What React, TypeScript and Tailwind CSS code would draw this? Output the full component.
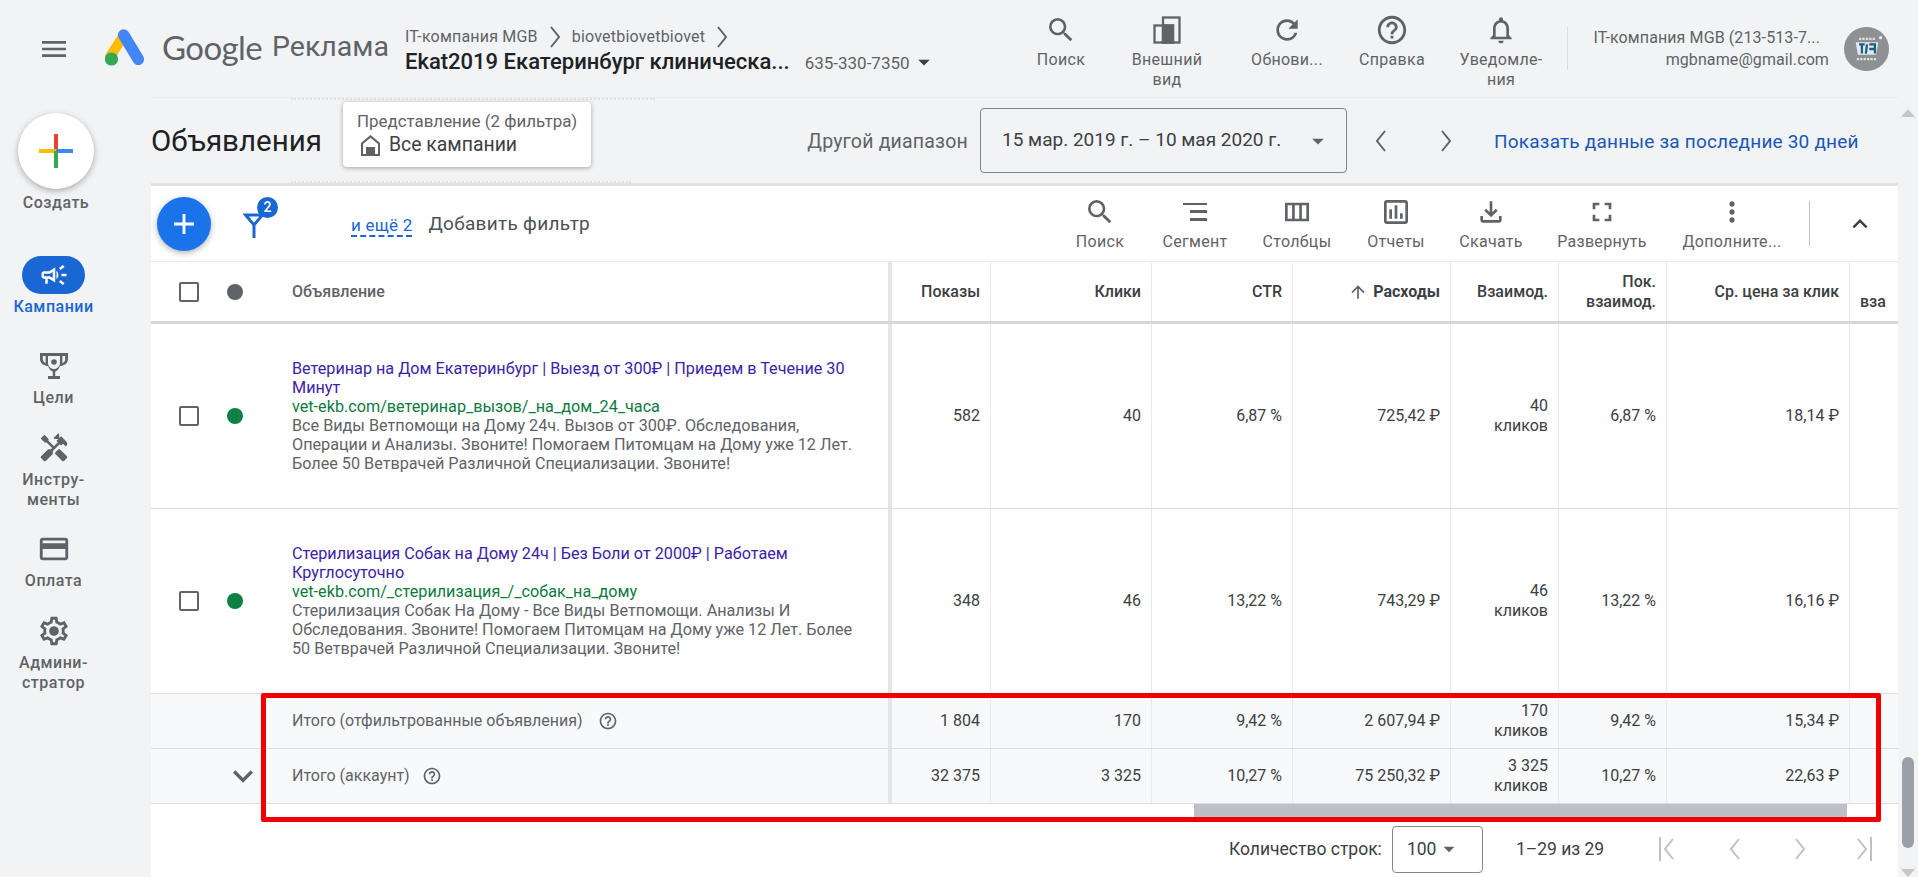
import React from 'react'
import {
	MdSearch, MdRefresh, MdHelpOutline, MdNotificationsNone, MdMenu, MdFullscreen, MdMoreVert,
	MdExpandLess, MdExpandMore, MdOutlineCampaign, MdHandyman, MdOutlineCreditCard,
	MdOutlineViewColumn, MdOutlineAssessment, MdOutlineFileDownload, MdAdd,
	MdArrowUpward, MdArrowDropDown,
} from 'react-icons/md'

const Logo = () => <svg viewBox="0 0 40 38" className="w-[40px] h-[38px]">
	<path d="M16.7 9.3 L5 28" stroke="#fbbc04" strokeWidth="10" strokeLinecap="round" />
	<path d="M18.7 6 L33.3 30.3" stroke="#4285f4" strokeWidth="11.5" strokeLinecap="round" />
	<circle cx="6.5" cy="30" r="6.6" fill="#34a853" />
</svg>

const AppearanceIcon = () => <svg viewBox="0 0 28 28" className="w-[28px] h-[28px]" fill="none" stroke="#5f6368" strokeWidth="2.3">
	<rect x="10" y="1.5" width="16.5" height="25" />
	<rect x="1.5" y="9.5" width="18.5" height="17" />
	<rect x="10" y="9.5" width="10" height="17" fill="#5f6368" />
</svg>

const SegmentIcon = () => <svg viewBox="0 0 28 28" className="w-[28px] h-[28px]" fill="#5f6368">
	<rect x="2" y="5" width="24" height="2" />
	<rect x="9" y="12" width="17" height="3" />
	<rect x="9" y="20" width="17" height="3" />
</svg>

const TrophyIcon = () => <svg viewBox="0 0 28 27" className="w-[28px] h-[27px]" fill="#5f6368" fillRule="evenodd">
	<path d="M0 0H28V6C28 11 23 13 20 13C19 16 17 18 15.2 18.6V23H20V26H8V23H12.8V18.6C11 18 9 16 8 13C5 13 0 11 0 6ZM8 3V10C8 13.5 11 16 14 16C17 16 20 13.5 20 10V3ZM2.8 3V6C2.8 8 4 9.6 5.6 10.2V3ZM22.4 3V10.2C24 9.6 25.2 8 25.2 6V3Z" />
	<circle cx="14" cy="9" r="2.8" />
</svg>

const GearIcon = () => <svg viewBox="0 0 24 24" className="w-[34px] h-[34px]" fill="#5f6368">
	<path d="M19.43 12.98c.04-.32.07-.64.07-.98 0-.34-.03-.66-.07-.98l2.11-1.65c.19-.15.24-.42.12-.64l-2-3.46c-.09-.16-.26-.25-.44-.25-.06 0-.12.01-.17.03l-2.49 1c-.52-.4-1.08-.73-1.69-.98l-.38-2.65C14.46 2.18 14.25 2 14 2h-4c-.25 0-.46.18-.49.42l-.38 2.65c-.61.25-1.17.59-1.69.98l-2.49-1c-.06-.02-.12-.03-.18-.03-.17 0-.34.09-.43.25l-2 3.46c-.13.22-.07.49.12.64l2.11 1.65c-.04.32-.07.65-.07.98 0 .33.03.66.07.98l-2.11 1.65c-.19.15-.24.42-.12.64l2 3.46c.09.16.26.25.44.25.06 0 .12-.01.17-.03l2.49-1c.52.4 1.08.73 1.69.98l.38 2.65c.03.24.24.42.49.42h4c.25 0 .46-.18.49-.42l.38-2.65c.61-.25 1.17-.59 1.69-.98l2.49 1c.06.02.12.03.18.03.17 0 .34-.09.43-.25l2-3.46c.12-.22.07-.49-.12-.64l-2.11-1.65zm-1.98-1.71c.04.31.05.52.05.73 0 .21-.02.43-.05.73l-.14 1.13.89.7 1.08.84-.7 1.21-1.27-.51-1.04-.42-.9.68c-.43.32-.84.56-1.25.73l-1.06.43-.16 1.13-.2 1.35h-1.4l-.19-1.35-.16-1.13-1.06-.43c-.43-.18-.83-.41-1.23-.71l-.91-.7-1.06.43-1.27.51-.7-1.21 1.08-.84.89-.7-.14-1.13c-.03-.31-.05-.54-.05-.74s.02-.43.05-.73l.14-1.13-.89-.7-1.08-.84.7-1.21 1.27.51 1.04.42.9-.68c.43-.32.84-.56 1.25-.73l1.06-.43.16-1.13.2-1.35h1.39l.19 1.35.16 1.13 1.06.43c.43.18.83.41 1.23.71l.91.7 1.06-.43 1.27-.51.7 1.21-1.07.85-.89.7.14 1.13zM12 8.6c-1.88 0-3.4 1.52-3.4 3.4s1.52 3.4 3.4 3.4 3.4-1.52 3.4-3.4-1.52-3.4-3.4-3.4z" />
</svg>

const HouseIcon = () => <svg viewBox="0 0 19 21" className="w-[19px] h-[21px] ml-[4px] mr-[9px]" fill="#5f6368" fillRule="evenodd">
	<path d="M9.5 0L19 8V21H0V8ZM9.5 2.8L2 9V19H5V12H14V19H17V9Z" />
</svg>

const ChevronThin = ({ dir, color = '#5f6368' }: { dir: 'l' | 'r'; color?: string }) => <svg viewBox="0 0 16 24" className="w-[16px] h-[24px]" fill="none" stroke={color} strokeWidth="2">
	<path d={dir === 'l' ? 'M12 2 L4 12 L12 22' : 'M4 2 L12 12 L4 22'} />
</svg>

const FilterIcon = () => <svg viewBox="0 0 22 26" className="w-[22px] h-[26px]" fill="none" stroke="#1a67d2" strokeWidth="3">
	<path d="M2.5 2 H19.5 L11 12 Z M11 12 V25" />
</svg>

const Avatar = () => <div className="w-[45px] h-[44px] rounded-full bg-[#8e9094] flex items-center justify-center">
	<svg viewBox="0 0 30 30" className="w-[34px] h-[34px]" fill="none">
		<path d="M5 9H25L23 20H7Z" fill="#dfeaf2" />
		<path d="M8 11H13M10.5 11V19M15 11L14 19M17 11H22V19M17 15H22" stroke="#1f5c7d" strokeWidth="2" />
		<path d="M8 6H22M6 24H24" stroke="#dfe3e6" strokeWidth="2" strokeDasharray="2 1" />
		<circle cx="27" cy="5" r="1.5" fill="#dfeaf2" />
	</svg>
</div>

const TopAction = ({ icon, label }: { icon: React.ReactNode; label: React.ReactNode }) => <div className="flex flex-col items-center w-[100px] pt-[15px]">
	<div className="h-[30px] flex items-center justify-center">{icon}</div>
	<div className="mt-[5px] text-[16px] leading-[20px] text-[#5f6368] text-center tracking-[0.3px]">{label}</div>
</div>

const ToolAction = ({ icon, label, w }: { icon: React.ReactNode; label: string; w: string }) => <div className={`flex flex-col items-center ${w}`}>
	<div className="h-[32px] flex items-center justify-center">{icon}</div>
	<div className="mt-[4px] text-[16px] leading-[20px] text-[#5f6368] whitespace-nowrap tracking-[0.3px]">{label}</div>
</div>

const NavItem = ({ icon, label, active, className = '' }: { icon: React.ReactNode; label: React.ReactNode; active?: boolean; className?: string }) => <div className={`flex flex-col items-center w-[107px] ${className}`}>
	{active
		? <div className="w-[63px] h-[38px] rounded-full bg-[#1967d2] flex items-center justify-center text-white">{icon}</div>
		: <div className="h-[34px] flex items-center justify-center text-[#5f6368]">{icon}</div>}
	<div className={`text-[16px] leading-[20px] text-center font-medium tracking-[0.5px] ${active ? 'mt-[3px] text-[#1967d2]' : 'mt-[5px] text-[#5f6368]'}`}>{label}</div>
</div>

const cols = ['w-[99px]', 'w-[161px]', 'w-[141px]', 'w-[158px]', 'w-[108px]', 'w-[108px]', 'w-[183px]']

const Row = ({ lead, vals, bg = 'bg-white', h }: {
	lead: React.ReactNode; vals: React.ReactNode[]; bg?: string; h: string
}) => <div className={`flex ${bg} ${h} border-b border-[#dadce0] shrink-0`}>
	<div className="w-[737px] flex items-center shrink-0">{lead}</div>
	<div className="w-[4px] bg-[#e3e5e8] shrink-0" />
	{vals.map((v, i) => <div key={i} className={`${cols[i]} shrink-0 border-r border-[#e8eaed] flex items-center justify-end text-right pr-[10px]`}>{v}</div>)}
	<div className="flex-1 overflow-hidden" />
</div>

const Clicks = ({ n }: { n: string }) => <div className="leading-[20px]">{n}<br />кликов</div>

const Checkbox = () => <div className="w-[20px] h-[20px] border-2 border-[#5f6368] rounded-[2px]" />

const RowMarks = ({ dot }: { dot: string }) => <div className="flex items-center w-[141px] pl-[28px] shrink-0">
	<Checkbox />
	<div className={`w-[16px] h-[16px] rounded-full ml-[28px] ${dot}`} />
</div>

const Ad = ({ title, url, desc }: { title: string; url: string; desc: string }) => <div className="w-[572px] text-[16.2px] leading-[19px]">
	<div className="text-[#3c22a8]">{title}</div>
	<div className="text-[#0d7a3f]">{url}</div>
	<div className="text-[#5f6368]">{desc}</div>
</div>

const App: React.FC = () => {
	return <div className="relative w-[1918px] h-[877px] overflow-hidden bg-[#f1f3f4] text-[#3c4043] font-['Roboto',sans-serif] flex flex-col">
		{/* top bar */}
		<div className="h-[97px] flex items-start shrink-0">
			<div className="w-[105px] pl-[38px] pt-[33px] shrink-0 text-[#5f6368]"><MdMenu className="w-[32px] h-[32px]" /></div>
			<div className="pt-[29px] w-[57px] shrink-0"><Logo /></div>
			<div className="pt-[27px] text-[33px] leading-[40px] text-[#5f6368] tracking-[-0.6px] w-[110px] shrink-0 font-['Lato',sans-serif]">Google</div>
			<div className="pt-[29px] text-[28.5px] leading-[36px] text-[#5f6368] w-[133px] shrink-0">Реклама</div>
			<div className="pt-[25px] w-[632px] shrink-0">
				<div className="flex items-center text-[16px] leading-[20px] text-[#5f6368] tracking-[0.2px]">IT-компания MGB<span className="mx-[9px]"><ChevronThin dir="r" /></span>biovetbiovetbiovet<span className="ml-[9px]"><ChevronThin dir="r" /></span></div>
				<div className="flex items-baseline -mt-[1px]">
					<span className="text-[22px] leading-[28px] font-medium text-[#202124]">Ekat2019 Екатеринбург клиническа...</span>
					<span className="ml-[15px] text-[17px] text-[#5f6368]">635-330-7350</span>
					<span className="self-center"><MdArrowDropDown className="w-[28px] h-[28px] text-[#3c4043]" /></span>
				</div>
			</div>
			<div className="flex shrink-0 -ml-[26px]">
				<TopAction icon={<MdSearch className="w-[32px] h-[32px] text-[#5f6368]" />} label="Поиск" />
				<div className="w-[6px]" />
				<TopAction icon={<AppearanceIcon />} label={<>Внешний<br />вид</>} />
				<div className="w-[20px]" />
				<TopAction icon={<MdRefresh className="w-[32px] h-[32px] text-[#5f6368]" />} label="Обнови..." />
				<div className="w-[5px]" />
				<TopAction icon={<MdHelpOutline className="w-[34px] h-[34px] text-[#5f6368]" />} label="Справка" />
				<div className="w-[9px]" />
				<TopAction icon={<MdNotificationsNone className="w-[32px] h-[32px] text-[#5f6368]" />} label={<>Уведомле-<br />ния</>} />
			</div>
			<div className="mt-[27px] w-px h-[43px] bg-[#dadce0] shrink-0 ml-[16px]" />
			<div className="pt-[27px] w-[261px] shrink-0 text-right text-[16px] leading-[22px] text-[#5f6368] tracking-[0.1px]">
				<div className="whitespace-nowrap pr-[9px]">IT-компания MGB (213-513-7...</div>
				<div>mgbname@gmail.com</div>
			</div>
			<div className="pt-[27px] ml-[15px] shrink-0"><Avatar /></div>
		</div>

		<div className="flex flex-1 min-h-0">
			{/* sidebar */}
			<div className="w-[151px] shrink-0 flex flex-col items-start pt-[16px]">
				<div className="w-[112px] flex flex-col items-center">
					<div className="w-[76px] h-[76px] rounded-full bg-white shadow-[0_2px_6px_rgba(60,64,67,0.4)] flex items-center justify-center">
						<svg viewBox="0 0 34 34" className="w-[34px] h-[34px]">
							<rect x="15" y="0" width="4" height="17" fill="#ea4335" />
							<rect x="0" y="15" width="17" height="4" fill="#fbbc04" />
							<rect x="17" y="15" width="17" height="4" fill="#4285f4" />
							<rect x="15" y="17" width="4" height="17" fill="#34a853" />
						</svg>
					</div>
					<div className="mt-[4px] text-[16px] leading-[20px] font-medium text-[#5f6368] tracking-[0.5px]">Создать</div>
				</div>
				<NavItem className="mt-[43px]" active icon={<MdOutlineCampaign className="w-[30px] h-[30px]" />} label="Кампании" />
				<NavItem className="mt-[32px]" icon={<TrophyIcon />} label="Цели" />
				<NavItem className="mt-[23px]" icon={<MdHandyman className="w-[32px] h-[32px]" />} label={<>Инстру-<br />менты</>} />
				<NavItem className="mt-[22px]" icon={<MdOutlineCreditCard className="w-[34px] h-[34px]" />} label="Оплата" />
				<NavItem className="mt-[23px]" icon={<GearIcon />} label={<>Админи-<br />стратор</>} />
			</div>

			{/* main */}
			<div className="w-[1747px] shrink-0 flex flex-col min-w-0">
				<div className="h-[89px] shrink-0 border-t border-[#e8eaed] relative">
					<div className="ml-[140px] w-[364px] border-t-2 border-dotted border-[#dfe1e4]" />
					<div className="flex items-start h-[83px]">
						<div className="w-[192px] text-[29.5px] leading-[36px] text-[#202124] mt-[23px]">Объявления</div>
						<div className="w-[248px] h-[65px] mt-[2px] rounded-[4px] bg-white shadow-[0_1px_4px_rgba(60,64,67,0.45)] pl-[14px] pt-[8px] shrink-0">
							<div className="text-[16.9px] leading-[22px] text-[#5f6368]">Представление (2 фильтра)</div>
							<div className="flex items-center text-[19.4px] leading-[24px] text-[#3c4043] mt-[1px]"><HouseIcon />Все кампании</div>
						</div>
						<div className="w-[377px] shrink-0 text-right text-[19.5px] leading-[36px] mt-[24px] text-[#5f6368] tracking-[0.2px] whitespace-nowrap">Другой диапазон</div>
						<div className="ml-[12px] w-[367px] h-[65px] mt-[8px] rounded-[4px] border border-[#80868b] flex items-center pl-[21px] pr-[14px] text-[19px] text-[#3c4043] justify-between shrink-0">
							<span className="whitespace-nowrap">15 мар. 2019 г. – 10 мая 2020 г.</span>
							<MdArrowDropDown className="w-[28px] h-[28px] text-[#5f6368]" />
						</div>
						<div className="ml-[26px] mt-[29px] flex gap-[49px]"><ChevronThin dir="l" /><ChevronThin dir="r" /></div>
						<div className="ml-[40px] mt-[24px] leading-[36px] text-[19px] text-[#1a56b8] whitespace-nowrap tracking-[0.2px]">Показать данные за последние 30 дней</div>
					</div>
					<div className="absolute left-[140px] bottom-[3px] w-[340px] border-t-2 border-dotted border-[#dfe1e4]" />
					<div className="absolute inset-x-0 bottom-0 h-[3px] bg-[#e0e2e5]" />
				</div>

				{/* toolbar */}
				<div className="h-[76px] bg-white flex items-center shrink-0 border-b border-[#e8eaed]">
					<div className="ml-[6px] w-[54px] h-[54px] rounded-full bg-[#1a73e8] shadow-[0_2px_6px_rgba(60,64,67,0.4)] flex items-center justify-center text-white shrink-0"><MdAdd className="w-[34px] h-[34px]" /></div>
					<div className="relative ml-[32px] mt-[4px] shrink-0">
						<FilterIcon />
						<div className="absolute -top-[16px] left-[14px] w-[21px] h-[21px] rounded-full bg-[#1967d2] text-white text-[14px] font-medium leading-[21px] text-center">2</div>
					</div>
					<div className="ml-[86px] text-[17px] text-[#1a67d2] border-b-[2px] border-dashed border-[#1a67d2] leading-[20px] tracking-[0.2px] shrink-0 mt-[4px]">и ещё 2</div>
					<div className="ml-[16px] text-[19px] text-[#4d5156] tracking-[0.3px] shrink-0 mt-[2px]">Добавить фильтр</div>
					<div className="flex-1" />
					<div className="flex items-center shrink-0">
						<ToolAction w="w-[90px]" icon={<MdSearch className="w-[32px] h-[32px] text-[#5f6368]" />} label="Поиск" />
						<ToolAction w="w-[100px]" icon={<SegmentIcon />} label="Сегмент" />
						<ToolAction w="w-[104px]" icon={<MdOutlineViewColumn className="w-[32px] h-[32px] text-[#5f6368]" />} label="Столбцы" />
						<ToolAction w="w-[94px]" icon={<MdOutlineAssessment className="w-[32px] h-[32px] text-[#5f6368]" />} label="Отчеты" />
						<ToolAction w="w-[96px]" icon={<MdOutlineFileDownload className="w-[32px] h-[32px] text-[#5f6368]" />} label="Скачать" />
						<ToolAction w="w-[126px]" icon={<MdFullscreen className="w-[32px] h-[32px] text-[#5f6368]" />} label="Развернуть" />
						<ToolAction w="w-[134px]" icon={<MdMoreVert className="w-[32px] h-[32px] text-[#5f6368]" />} label="Дополните..." />
						<div className="w-px h-[45px] bg-[#bdc1c6] ml-[10px]" />
						<div className="w-[88px] pl-[11px] flex justify-center"><MdExpandLess className="w-[30px] h-[30px] text-[#3c4043]" /></div>
					</div>
				</div>

				{/* table */}
				<div className="flex flex-col text-[16px] shrink-0">
					<div className="flex h-[62px] bg-white border-b-[3px] border-[#d5d7da] shrink-0 text-[#3c4043] font-medium">
						<div className="w-[737px] flex items-center shrink-0">
							<RowMarks dot="bg-[#5f6368]" />
							<span className="text-[#5f6368]">Объявление</span>
						</div>
						<div className="w-[4px] bg-[#e3e5e8]" />
						{['Показы', 'Клики', 'CTR', <span key="r" className="font-bold flex items-center"><MdArrowUpward className="w-[20px] h-[20px] mr-[5px] text-[#5f6368]" />Расходы</span>, 'Взаимод.', <span key="p" className="leading-[20px]">Пок.<br />взаимод.</span>, 'Ср. цена за клик'].map((v, i) => <div key={i} className={`${cols[i]} shrink-0 border-r border-[#e8eaed] flex items-center justify-end text-right pr-[10px]`}>{v}</div>)}
						<div className="flex-1 overflow-hidden pt-[28px] pl-[10px] whitespace-nowrap">вза</div>
					</div>
					<Row h="h-[185px]" lead={<>
						<RowMarks dot="bg-[#0d8043]" />
						<Ad title="Ветеринар на Дом Екатеринбург | Выезд от 300₽ | Приедем в Течение 30 Минут" url="vet-ekb.com/ветеринар_вызов/_на_дом_24_часа" desc="Все Виды Ветпомощи на Дому 24ч. Вызов от 300₽. Обследования, Операции и Анализы. Звоните! Помогаем Питомцам на Дому уже 12 Лет. Более 50 Ветврачей Различной Специализации. Звоните!" />
					</>} vals={['582', '40', '6,87 %', '725,42 ₽', <Clicks n="40" />, '6,87 %', '18,14 ₽']} />
					<Row h="h-[185px]" lead={<>
						<RowMarks dot="bg-[#0d8043]" />
						<Ad title="Стерилизация Собак на Дому 24ч | Без Боли от 2000₽ | Работаем Круглосуточно" url="vet-ekb.com/_стерилизация_/_собак_на_дому" desc="Стерилизация Собак На Дому - Все Виды Ветпомощи. Анализы И Обследования. Звоните! Помогаем Питомцам на Дому уже 12 Лет. Более 50 Ветврачей Различной Специализации. Звоните!" />
					</>} vals={['348', '46', '13,22 %', '743,29 ₽', <Clicks n="46" />, '13,22 %', '16,16 ₽']} />
					<Row h="h-[55px]" bg="bg-[#f8f9fa]" lead={<div className="pl-[141px] flex items-center text-[#5f6368]">Итого (отфильтрованные объявления)<MdHelpOutline className="ml-[15px] w-[20px] h-[20px]" /></div>}
						vals={['1 804', '170', '9,42 %', '2 607,94 ₽', <Clicks n="170" />, '9,42 %', '15,34 ₽']} />
					<Row h="h-[55px]" bg="bg-[#f8f9fa]" lead={<div className="flex items-center text-[#5f6368]">
						<div className="w-[141px] pl-[72px] shrink-0"><MdExpandMore className="w-[40px] h-[40px] text-[#5f6368]" /></div>
						Итого (аккаунт)<MdHelpOutline className="ml-[12px] w-[20px] h-[20px]" />
					</div>} vals={['32 375', '3 325', '10,27 %', '75 250,32 ₽', <Clicks n="3 325" />, '10,27 %', '22,63 ₽']} />
				</div>

				{/* horizontal scrollbar */}
				<div className="h-[13px] bg-white flex shrink-0">
					<div className="w-[1043px]" />
					<div className="w-[653px] bg-[#bdc1c6]" />
				</div>

				{/* pagination */}
				<div className="flex-1 bg-white flex items-center text-[#3c4043] text-[17.5px] pt-[4px]">
					<div className="w-[1078px]" />
					<span className="whitespace-nowrap">Количество строк:</span>
					<div className="ml-[10px] w-[91px] h-[47px] rounded-[4px] border border-[#80868b] flex items-center pl-[14px]">100<MdArrowDropDown className="w-[26px] h-[26px] text-[#5f6368]" /></div>
					<span className="ml-[33px] whitespace-nowrap">1–29 из 29</span>
					<div className="ml-[55px] flex items-center">
						<div className="flex items-center"><div className="w-[2px] h-[24px] bg-[#bdc1c6]" /><ChevronThin dir="l" color="#bdc1c6" /></div>
						<div className="ml-[50px]"><ChevronThin dir="l" color="#bdc1c6" /></div>
						<div className="ml-[49px]"><ChevronThin dir="r" color="#bdc1c6" /></div>
						<div className="ml-[46px] flex items-center"><ChevronThin dir="r" color="#bdc1c6" /><div className="w-[2px] h-[24px] bg-[#bdc1c6]" /></div>
					</div>
				</div>
			</div>

			{/* page scrollbar */}
			<div className="w-[20px] shrink-0 flex flex-col items-center">
				<div className="mt-[12px] w-0 h-0 border-x-[7px] border-x-transparent border-b-[8px] border-b-[#c4c7ca]" />
				<div className="mt-[640px] w-[12px] h-[91px] rounded-full bg-[#9aa0a6]" />
				<div className="mt-[21px] w-0 h-0 border-x-[7px] border-x-transparent border-t-[8px] border-t-[#c4c7ca]" />
			</div>
		</div>

		{/* annotation */}
		<div className="absolute left-[261px] top-[693px] w-[1620px] h-[129px] border-[5px] border-[#f00000] rounded-[2px]" />
	</div>
}

export default App
